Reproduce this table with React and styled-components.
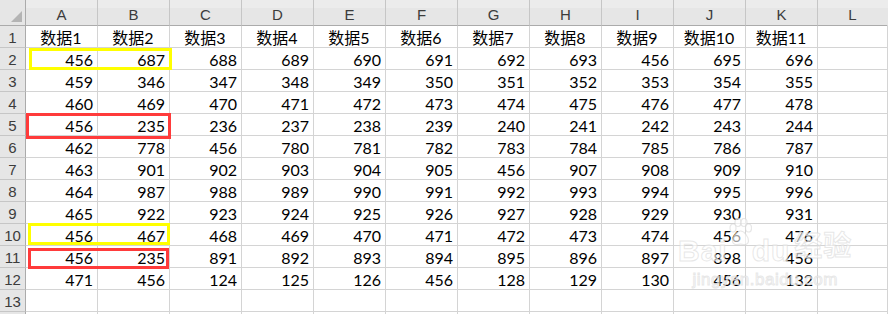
import React from 'react';
import styled, { createGlobalStyle } from 'styled-components';

const GlobalStyle = createGlobalStyle`
  html, body {
    margin: 0;
    padding: 0;
    background: #ffffff;
    overflow: hidden;
  }
`;

const COLS = ['A', 'B', 'C', 'D', 'E', 'F', 'G', 'H', 'I', 'J', 'K', 'L'];

const rows = [
  ['数据1', '数据2', '数据3', '数据4', '数据5', '数据6', '数据7', '数据8', '数据9', '数据10', '数据11'],
  [456, 687, 688, 689, 690, 691, 692, 693, 456, 695, 696],
  [459, 346, 347, 348, 349, 350, 351, 352, 353, 354, 355],
  [460, 469, 470, 471, 472, 473, 474, 475, 476, 477, 478],
  [456, 235, 236, 237, 238, 239, 240, 241, 242, 243, 244],
  [462, 778, 456, 780, 781, 782, 783, 784, 785, 786, 787],
  [463, 901, 902, 903, 904, 905, 456, 907, 908, 909, 910],
  [464, 987, 988, 989, 990, 991, 992, 993, 994, 995, 996],
  [465, 922, 923, 924, 925, 926, 927, 928, 929, 930, 931],
  [456, 467, 468, 469, 470, 471, 472, 473, 474, 456, 476],
  [456, 235, 891, 892, 893, 894, 895, 896, 897, 898, 456],
  [471, 456, 124, 125, 126, 456, 128, 129, 130, 456, 132],
  [],
];

// hand-drawn boxes over the sheet
const marks = [
  { color: '#ffff00', top: 48, left: 29, width: 143, height: 22 },
  { color: '#ff3b3b', top: 113, left: 26, width: 145, height: 26 },
  { color: '#ffff00', top: 223, left: 28, width: 142, height: 22 },
  { color: '#ff3b3b', top: 248, left: 28, width: 141, height: 21 },
];

const Sheet = styled.div`
  position: relative;
  width: 888px;
  height: 314px;
  overflow: hidden;
  display: grid;
  grid-template-columns: 26px repeat(11, 72px) 1fr;
  grid-template-rows: 26px repeat(13, 22px) 1fr;
  font-family: Lato, 'Noto Sans CJK SC', sans-serif;
`;

const Corner = styled.div`
  position: relative;
  background: #e6e6e6;
  border-right: 1px solid #ababab;
  border-bottom: 1px solid #ababab;
  box-sizing: border-box;

  svg {
    position: absolute;
    right: 3px;
    bottom: 3px;
  }
`;

const ColHead = styled.div`
  display: flex;
  align-items: flex-end;
  justify-content: center;
  padding-bottom: 1px;
  box-sizing: border-box;
  background: linear-gradient(#ececec 0 8px, #e6e6e6 8px);
  border-right: 1px solid ${p => (p.$last ? 'transparent' : '#c6c6c6')};
  border-bottom: 1px solid #ababab;
  font-family: 'Liberation Sans', 'Noto Sans', sans-serif;
  font-size: 15px;
  line-height: 18px;
  color: #3c3c3c;
`;

const RowHead = styled.div`
  display: flex;
  align-items: center;
  justify-content: center;
  box-sizing: border-box;
  background: #e6e6e6;
  border-right: 1px solid #ababab;
  border-bottom: 1px solid #c6c6c6;
  font-family: 'Liberation Sans', 'Noto Sans', sans-serif;
  font-size: 15px;
  padding-top: 2px;
  color: #3c3c3c;
`;

const Cell = styled.div`
  display: flex;
  align-items: center;
  justify-content: ${p => (p.$text ? 'center' : 'flex-end')};
  padding: 1px 4px 0 3px;
  box-sizing: border-box;
  border-right: 1px solid #d4d4d4;
  border-bottom: 1px solid #d4d4d4;
  font-size: 16px;
  color: #000;
  white-space: nowrap;
`;

const Mark = styled.div`
  position: absolute;
  box-sizing: border-box;
  border: 3px solid ${p => p.$color};
  pointer-events: none;
`;

const Watermark = styled.div`
  position: absolute;
  left: 678px;
  top: 218px;
  display: flex;
  flex-direction: column;
  align-items: center;
  color: rgba(255, 255, 255, 0.6);
  -webkit-text-stroke: 1px rgba(215, 215, 215, 0.6);
  font-family: 'Liberation Sans', 'Noto Sans CJK SC', sans-serif;
  pointer-events: none;
`;

const LogoLine = styled.div`
  display: flex;
  align-items: flex-end;
  font-size: 30px;
  font-weight: bold;
  line-height: 30px;
  letter-spacing: 1px;

  span.cn {
    font-size: 28px;
    margin-left: 4px;
    margin-bottom: 4px;
  }
`;

const SiteLine = styled.div`
  font-size: 17px;
  line-height: 20px;
  margin-top: 4px;
  letter-spacing: 0.5px;
`;

function Paw() {
  return (
    <svg width='24' height='28' viewBox='0 0 24 28' style={{ margin: '0 0 20px' }}>
      <g fill='rgba(255,255,255,0.6)' stroke='rgba(215,215,215,0.6)' strokeWidth='1.2'>
        <ellipse cx='5' cy='10' rx='3' ry='4' />
        <ellipse cx='10' cy='4.5' rx='3' ry='4' />
        <ellipse cx='16' cy='4.5' rx='3' ry='4' />
        <ellipse cx='20.5' cy='10' rx='3' ry='4' />
        <path d='M12.5 13c-4 0-8 6-8 10 0 3 3 4 5 3.5 2-.5 4-.5 6 0 2 .5 5-.5 5-3.5 0-4-4-10-8-10z' />
      </g>
    </svg>
  );
}

export default function App() {
  return (
    <>
      <GlobalStyle />
      <Sheet>
        <Corner>
          <svg width='11' height='11' viewBox='0 0 11 11'>
            <polygon points='11,0 11,11 0,11' fill='#b4b4b4' />
          </svg>
        </Corner>
        {COLS.map((c, i) => (
          <ColHead key={c} $last={i === COLS.length - 1}>
            {c}
          </ColHead>
        ))}
        {rows.map((row, r) => (
          <React.Fragment key={r}>
            <RowHead>{r + 1}</RowHead>
            {COLS.map((c, i) => (
              <Cell key={c} $text={typeof row[i] === 'string'}>
                {row[i]}
              </Cell>
            ))}
          </React.Fragment>
        ))}
        <RowHead />
        {COLS.map(c => (
          <Cell key={c} />
        ))}
        {marks.map((m, i) => (
          <Mark
            key={i}
            $color={m.color}
            style={{ top: m.top, left: m.left, width: m.width, height: m.height }}
          />
        ))}
        <Watermark>
          <LogoLine>
            Bai
            <Paw />
            du<span className='cn'>经验</span>
          </LogoLine>
          <SiteLine>jingyan.baidu.com</SiteLine>
        </Watermark>
      </Sheet>
    </>
  );
}
